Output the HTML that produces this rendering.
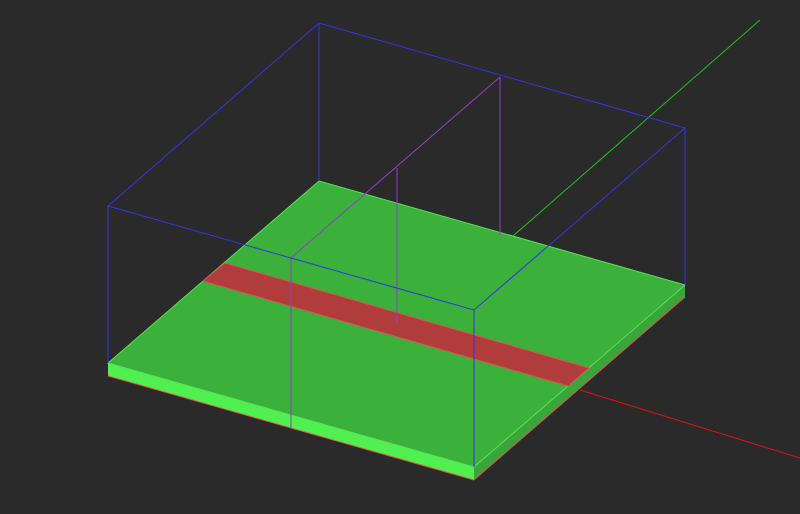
<!DOCTYPE html>
<html><head><style>html,body{margin:0;padding:0;background:#2a2a2a;width:800px;height:514px;overflow:hidden}</style></head>
<body>
<svg width="800" height="514" viewBox="0 0 800 514" xmlns="http://www.w3.org/2000/svg">
<rect width="800" height="514" fill="#2a2a2a"/>
<line x1="513" y1="236" x2="760" y2="20" stroke="#20c020" stroke-width="1"/>
<line x1="580" y1="390" x2="800" y2="458" stroke="#e01010" stroke-width="1"/>
<polygon points="108,363 474,467 474,480 108,376" fill="#50f050"/>
<polygon points="474,467 685,285 685,297 474,480" fill="#3aa63a"/>
<line x1="108" y1="376" x2="474" y2="480" stroke="#e05050" stroke-width="1"/>
<line x1="474" y1="480" x2="685" y2="297" stroke="#e05050" stroke-width="1"/>
<polygon points="319,181 685,285 474,467 108,363" fill="#3bb03b" stroke="#5ae05a" stroke-width="1"/>
<polygon points="225,263 589,368 568,386 203,281" fill="#b03c3c" stroke="#e05050" stroke-width="1"/>
<g stroke="#9040c0" stroke-width="1" fill="none">
<line x1="291" y1="258" x2="500" y2="77"/>
<line x1="500" y1="77" x2="500" y2="235"/>
<line x1="397" y1="168" x2="397" y2="324"/>
<line x1="291" y1="258" x2="291" y2="428"/>
</g>
<g stroke="#3434e0" stroke-width="1" fill="none">
<polygon points="108,206 319,23 685,128 474,310"/>
<line x1="108" y1="206" x2="108" y2="363"/>
<line x1="319" y1="23" x2="319" y2="181"/>
<line x1="685" y1="128" x2="685" y2="285"/>
<line x1="474" y1="310" x2="474" y2="467"/>
</g>
</svg>
</body></html>
